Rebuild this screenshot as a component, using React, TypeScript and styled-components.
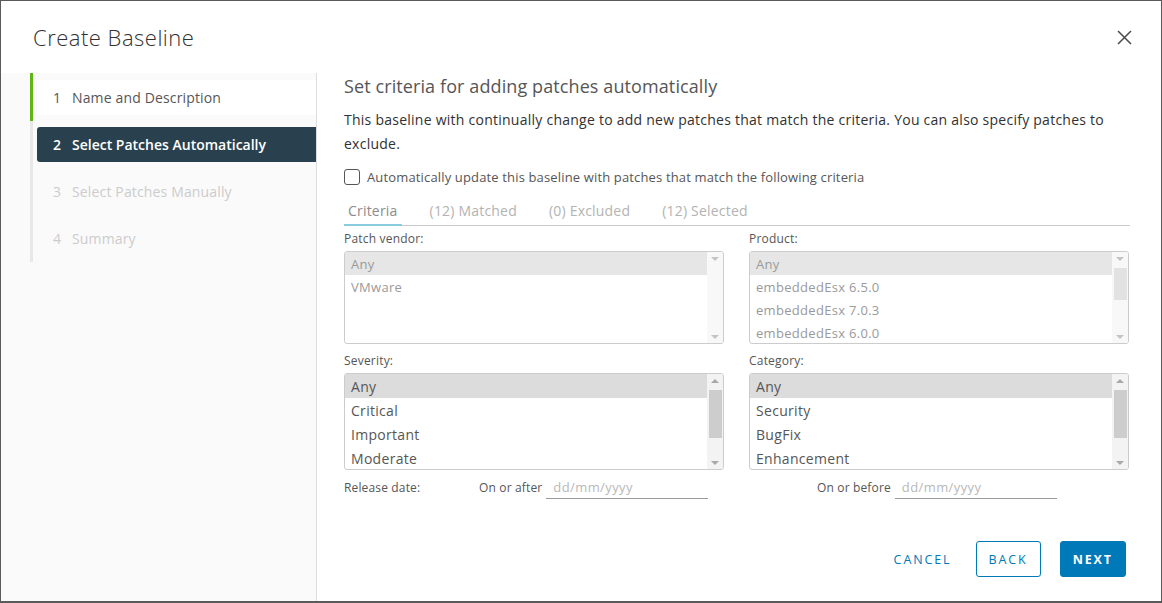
import styled, { createGlobalStyle } from "styled-components";

const GlobalStyle = createGlobalStyle`
  html, body {
    margin: 0;
    padding: 0;
    background: #3a3a3a;
  }
  body {
    font-family: "Open Sans", Lato, sans-serif;
    color: #565656;
  }
  * {
    box-sizing: border-box;
  }
`;

const Modal = styled.div`
  width: 1162px;
  height: 603px;
  background: #fff;
  border: 1px solid #5a5a5a;
  border-bottom-width: 2px;
  display: flex;
  flex-direction: column;
  overflow: hidden;
`;

const Header = styled.div`
  height: 72px;
  flex: none;
  display: flex;
  align-items: center;
  justify-content: space-between;
  padding: 0 28px 0 32px;
`;

const Title = styled.h1`
  margin: 0;
  font-size: 22px;
  font-weight: 300;
  letter-spacing: 0.5px;
  color: #313131;
`;

const CloseButton = styled.button`
  appearance: none;
  background: none;
  border: none;
  padding: 0;
  width: 18px;
  height: 18px;
  display: flex;
  align-items: center;
  justify-content: center;
  cursor: pointer;
`;

const Body = styled.div`
  flex: 1;
  display: flex;
  min-height: 0;
`;

const Sidebar = styled.nav`
  width: 316px;
  flex: none;
  background: #fafafa;
  border-right: 1px solid #dddddd;
  padding-left: 29px;
`;

const StepTrack = styled.div<{ $done?: boolean; $first?: boolean }>`
  border-left: 3px solid ${(p) => (p.$done ? "#60b515" : "#e8e8e8")};
  padding: ${(p) => (p.$first ? "7px" : "6px")} 0 6px 4px;
`;

const StepItem = styled.div<{ $state: "done" | "active" | "todo" }>`
  height: 35px;
  display: flex;
  align-items: center;
  padding-left: 16px;
  font-size: 14px;
  letter-spacing: ${(p) => (p.$state === "active" ? "0" : "0.15px")};
  border-radius: 3px 0 0 3px;
  background: ${(p) =>
    p.$state === "active" ? "#29414e" : p.$state === "done" ? "#fff" : "transparent"};
  color: ${(p) =>
    p.$state === "active" ? "#fff" : p.$state === "done" ? "#565656" : "#cccccc"};
  font-weight: ${(p) => (p.$state === "active" ? 600 : 400)};
`;

const StepNum = styled.span`
  width: 19px;
  flex: none;
`;

const Main = styled.div`
  flex: 1;
  display: flex;
  flex-direction: column;
  padding: 0 31px 0 27px;
`;

const SectionTitle = styled.h2`
  margin: 0;
  font-size: 18px;
  line-height: 26px;
  font-weight: 400;
  letter-spacing: 0.1px;
  color: #565656;
`;

const Para = styled.p`
  margin: 9px 0 0;
  font-size: 14px;
  line-height: 24px;
  letter-spacing: 0.25px;
  color: #313131;
`;

const CheckRow = styled.label`
  margin-top: 12px;
  display: flex;
  align-items: center;
  gap: 7px;
  font-size: 13px;
  line-height: 18px;
  letter-spacing: 0.15px;
  color: #565656;
`;

const CheckBox = styled.span`
  width: 16px;
  height: 16px;
  border: 1px solid #565656;
  border-radius: 3px;
  background: #fff;
  flex: none;
`;

const Tabs = styled.div`
  margin-top: 11px;
  display: flex;
  gap: 24px;
  border-bottom: 1px solid #cccccc;
`;

const Tab = styled.div<{ $active?: boolean }>`
  padding: 0 4px;
  height: 29px;
  display: flex;
  align-items: center;
  font-size: 14px;
  letter-spacing: 0.2px;
  color: ${(p) => (p.$active ? "#8c8c8c" : "#b3b3b3")};
  border-bottom: 2px solid ${(p) => (p.$active ? "#89cbdf" : "transparent")};
  margin-bottom: -1px;
`;

const Grid = styled.div`
  display: grid;
  grid-template-columns: 380px 380px;
  column-gap: 25px;
`;

const Field = styled.div`
  display: flex;
  flex-direction: column;
`;

const FieldLabel = styled.div<{ $top: number }>`
  margin-top: ${(p) => p.$top}px;
  font-size: 12px;
  line-height: 18px;
  letter-spacing: 0.2px;
  color: #565656;
  margin-bottom: 3px;
`;

const ListBox = styled.div<{ $rows: number; $row: number }>`
  height: ${(p) => p.$rows * p.$row + 1}px;
  border: 1px solid #cccccc;
  border-radius: 3px;
  display: flex;
  overflow: hidden;
  background: #fff;
`;

const Options = styled.div`
  flex: 1;
  display: flex;
  flex-direction: column;
`;

const Option = styled.div<{ $h: number; $sel?: boolean; $disabled?: boolean }>`
  height: ${(p) => p.$h}px;
  flex: none;
  display: flex;
  align-items: center;
  padding-left: 6px;
  font-size: ${(p) => (p.$disabled ? 13 : 14)}px;
  letter-spacing: 0.3px;
  color: ${(p) => (p.$disabled ? "#9a9a9a" : "#565656")};
  background: ${(p) =>
    p.$sel ? (p.$disabled ? "#e6e6e6" : "#dcdcdc") : "transparent"};
`;

const Scroll = styled.div<{ $disabled?: boolean }>`
  width: 16px;
  flex: none;
  background: ${(p) => (p.$disabled ? "#f8f8f8" : "#f3f3f3")};
  display: flex;
  flex-direction: column;
  align-items: center;
  padding: 5px 0 4px;
`;

const Arrow = styled.div<{ $up?: boolean; $color: string }>`
  width: 0;
  height: 0;
  border-left: 4px solid transparent;
  border-right: 4px solid transparent;
  ${(p) =>
    p.$up
      ? `border-bottom: 4px solid ${p.$color};`
      : `border-top: 4px solid ${p.$color};`}
  flex: none;
`;

const Thumb = styled.div<{ $h: number; $color: string }>`
  width: 13px;
  height: ${(p) => p.$h}px;
  margin-top: 7px;
  background: ${(p) => p.$color};
  flex: none;
`;

const Spacer = styled.div`
  flex: 1;
`;

const DateCell = styled.div<{ $indent?: number }>`
  margin-top: 5px;
  display: flex;
  align-items: center;
  padding-left: ${(p) => p.$indent ?? 0}px;
  font-size: 12px;
  letter-spacing: 0.15px;
  color: #565656;
`;

const DateLabel = styled.span`
  width: 135px;
  flex: none;
`;

const DatePrefix = styled.span`
  margin-right: 4px;
`;

const DateInput = styled.div`
  width: 162px;
  height: 24px;
  border-bottom: 1px solid #9a9a9a;
  padding-left: 7px;
  display: flex;
  align-items: center;
  font-size: 13px;
  letter-spacing: 0.4px;
  color: #b8b8b8;
`;

const Footer = styled.div`
  margin-top: auto;
  display: flex;
  justify-content: flex-end;
  gap: 19px;
  padding: 0 4px 24px 0;
`;

const Btn = styled.button<{ $kind: "flat" | "outline" | "primary" }>`
  appearance: none;
  height: 36px;
  min-width: 65px;
  padding: 0 12px;
  border-radius: 3px;
  font-family: "Open Sans", Lato, sans-serif;
  font-size: 12.5px;
  font-weight: ${(p) => (p.$kind === "primary" ? 700 : 500)};
  letter-spacing: 1.9px;
  cursor: pointer;
  border: 1px solid ${(p) => (p.$kind === "flat" ? "transparent" : "#0079b8")};
  background: ${(p) => (p.$kind === "primary" ? "#0079b8" : "#fff")};
  color: ${(p) => (p.$kind === "primary" ? "#fff" : "#0079b8")};
  margin-right: ${(p) => (p.$kind === "flat" ? "-8px" : "0")};
`;

type ListProps = {
  items: string[];
  row: number;
  disabled?: boolean;
  thumb?: number;
};

function List({ items, row, disabled, thumb }: ListProps) {
  const arrow = disabled ? "#c4c4c4" : "#a8a8a8";
  return (
    <ListBox $rows={4} $row={row}>
      <Options>
        {items.map((it, i) => (
          <Option key={it} $h={row} $sel={i === 0} $disabled={disabled}>
            {it}
          </Option>
        ))}
      </Options>
      <Scroll $disabled={disabled}>
        <Arrow $up={!disabled} $color={arrow} />
        {thumb ? (
          <Thumb $h={thumb} $color={disabled ? "#e2e2e2" : "#cdcdcd"} />
        ) : null}
        <Spacer />
        <Arrow $color={arrow} />
      </Scroll>
    </ListBox>
  );
}

const steps = [
  "Name and Description",
  "Select Patches Automatically",
  "Select Patches Manually",
  "Summary",
];

export default function App() {
  return (
    <>
      <GlobalStyle />
      <Modal>
        <Header>
          <Title>Create Baseline</Title>
          <CloseButton aria-label="Close">
            <svg width="15" height="15" viewBox="0 0 15 15">
              <path
                d="M1 1 L14 14 M14 1 L1 14"
                stroke="#4a4a4a"
                strokeWidth="1.5"
                fill="none"
              />
            </svg>
          </CloseButton>
        </Header>
        <Body>
          <Sidebar>
            {steps.map((s, i) => (
              <StepTrack key={s} $done={i === 0} $first={i === 0}>
                <StepItem $state={i === 0 ? "done" : i === 1 ? "active" : "todo"}>
                  <StepNum>{i + 1}</StepNum>
                  {s}
                </StepItem>
              </StepTrack>
            ))}
          </Sidebar>
          <Main>
            <SectionTitle>Set criteria for adding patches automatically</SectionTitle>
            <Para>
              This baseline with continually change to add new patches that match the
              criteria. You can also specify patches to exclude.
            </Para>
            <CheckRow>
              <CheckBox />
              Automatically update this baseline with patches that match the following
              criteria
            </CheckRow>
            <Tabs>
              <Tab $active>Criteria</Tab>
              <Tab>(12) Matched</Tab>
              <Tab>(0) Excluded</Tab>
              <Tab>(12) Selected</Tab>
            </Tabs>
            <Grid>
              <Field>
                <FieldLabel $top={4}>Patch vendor:</FieldLabel>
                <List items={["Any", "VMware"]} row={23} disabled />
              </Field>
              <Field>
                <FieldLabel $top={4}>Product:</FieldLabel>
                <List
                  items={["Any", "embeddedEsx 6.5.0", "embeddedEsx 7.0.3", "embeddedEsx 6.0.0"]}
                  row={23}
                  disabled
                  thumb={32}
                />
              </Field>
              <Field>
                <FieldLabel $top={8}>Severity:</FieldLabel>
                <List items={["Any", "Critical", "Important", "Moderate"]} row={24} thumb={48} />
              </Field>
              <Field>
                <FieldLabel $top={8}>Category:</FieldLabel>
                <List items={["Any", "Security", "BugFix", "Enhancement"]} row={24} thumb={48} />
              </Field>
              <DateCell>
                <DateLabel>Release date:</DateLabel>
                <DatePrefix>On or after</DatePrefix>
                <DateInput>dd/mm/yyyy</DateInput>
              </DateCell>
              <DateCell $indent={68}>
                <DatePrefix>On or before</DatePrefix>
                <DateInput>dd/mm/yyyy</DateInput>
              </DateCell>
            </Grid>
            <Footer>
              <Btn $kind="flat">CANCEL</Btn>
              <Btn $kind="outline">BACK</Btn>
              <Btn $kind="primary">NEXT</Btn>
            </Footer>
          </Main>
        </Body>
      </Modal>
    </>
  );
}
